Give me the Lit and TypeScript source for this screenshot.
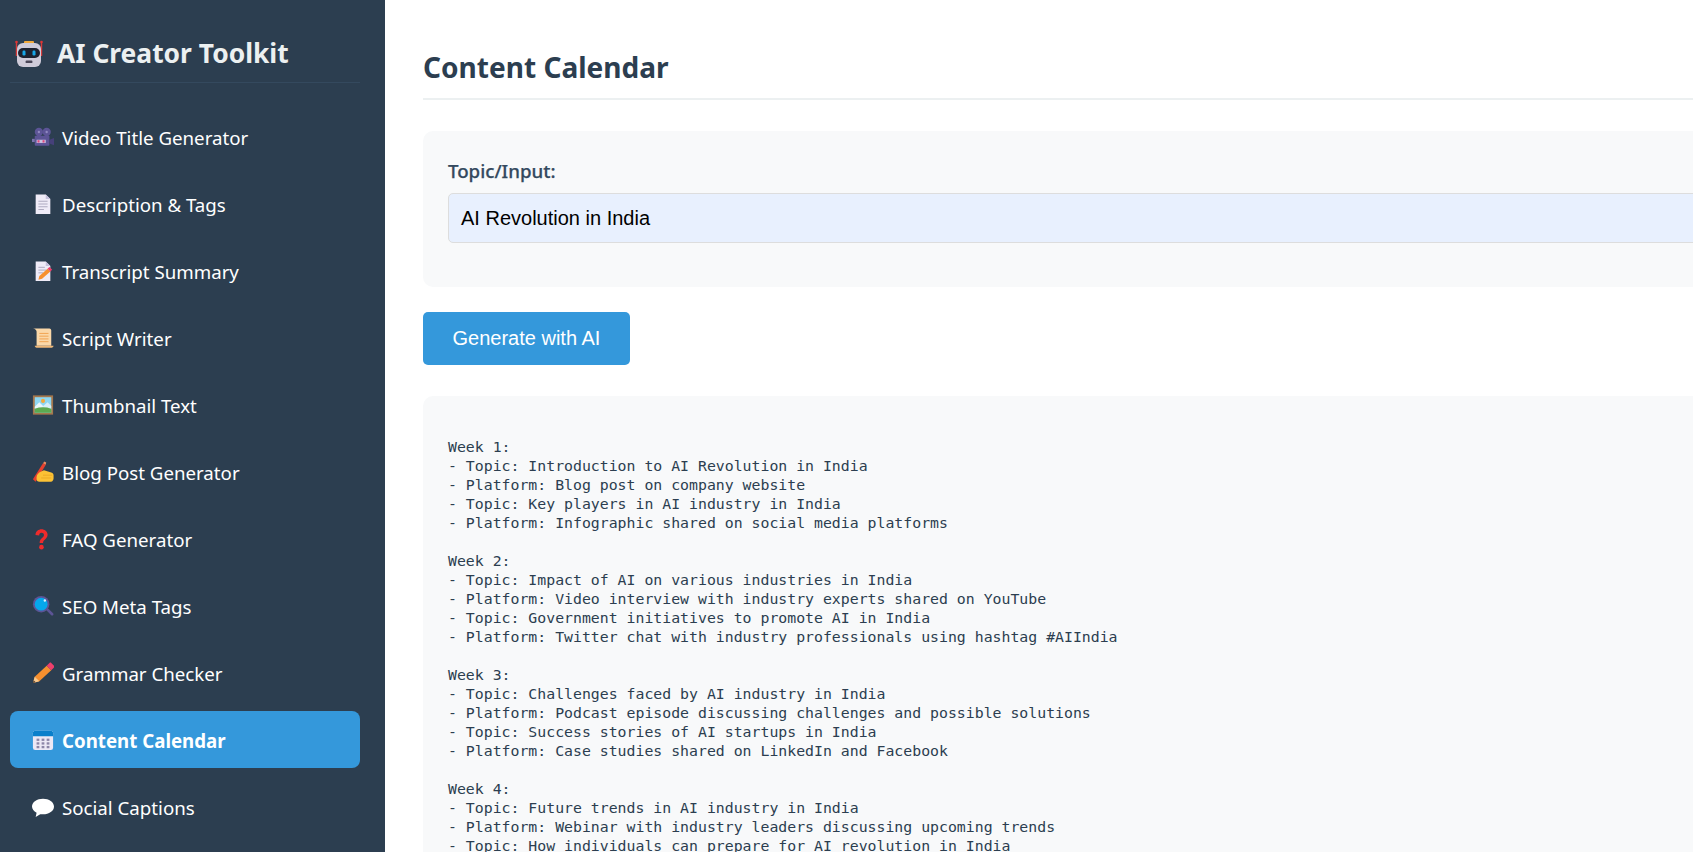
import { LitElement, html, css, svg } from "lit";
import { customElement } from "lit/decorators.js";

const icons: Record<string, unknown> = {
  camera: svg`<circle cx="7.500" cy="6.500" r="4.500" fill="#5c5496"/><circle cx="16" cy="6.500" r="4.500" fill="#5c5496"/><circle cx="7.500" cy="6.500" r="1.300" fill="#8f88c0"/><circle cx="16" cy="6.500" r="1.300" fill="#8f88c0"/><rect x="3" y="10.500" width="16" height="11" rx="1" fill="#5c5496"/><path d="M0 14h3v3.500H0z" fill="#7a73ae"/><path d="M19 15l5-2v8l-5-2z" fill="#46407a"/><rect x="5" y="15" width="10" height="3.500" fill="#c9c4e2"/><rect x="6" y="15.500" width="2.200" height="2.500" fill="#e0457b"/><rect x="11.500" y="15.500" width="2.200" height="2.500" fill="#e0457b"/>`,
  doc: svg`<path d="M4 1.500h11l5 5V23H4z" fill="#efebf7"/><path d="M15 1.500l5 5h-5z" fill="#c6c0dc"/><path d="M7 9h10M7 12h10M7 15h10M7 18h6" stroke="#a8a4bb" stroke-width="1"/>`,
  memo: svg`<path d="M4 1.500h11l5 5V23H4z" fill="#efebf7"/><path d="M15 1.500l5 5h-5z" fill="#c6c0dc"/><path d="M7 8h7M7 11h9M7 14h5" stroke="#a8a4bb" stroke-width="1"/><path d="M7 21.500l1-4 9-8 3 3-9 8z" fill="#f7902f"/><path d="M17 9.500l2-2 3 3-2 2z" fill="#ee3f6c"/>`,
  scroll: svg`<path d="M1 1.500h18c1 0 2 1 2 2v17H5V5c0-2-2-3.500-4-3.500z" fill="#fbd8a8"/><path d="M3 20.500h20.500c0 1-1 2-2 2H5c-1 0-2-1-2-2z" fill="#eeb878"/><path d="M8 7h10M8 10h10M8 13h10M8 16h10" stroke="#f0a04c" stroke-width="1"/>`,
  picture: svg`<rect x="1" y="1.500" width="22" height="21" fill="#a5774c"/><rect x="3" y="3.500" width="18" height="17" fill="#8fd7f2"/><circle cx="12" cy="7.500" r="2.200" fill="#f4a93b"/><path d="M3 14l5-5 7 7H3z" fill="#eaf6fb"/><path d="M10 15l7-6 4 4v4H10z" fill="#d8eef7"/><path d="M3 16c6-2 12-2 18 0v4.500H3z" fill="#5caa50"/>`,
  hand: svg`<path d="M1 20L12 2.500l3 1.500L4 22.500z" fill="#e8402e"/><path d="M12 2.500l1.500-2 2 1-.5 2.500z" fill="#f08a5d"/><path d="M5 18c0-3 2-5 5-6.500l3-1.300 8 2.300c2 .6 2.500 2 2.500 3v3.500c0 1.500-1 3.500-3 3.500H8c-2 0-3-1-3-3z" fill="#fcc235"/><path d="M12 15.500h10M10 18.500h11" stroke="#e9a41f" stroke-width=".8"/>`,
  question: svg`<g transform="translate(-2.800 -1.500) scale(1.100 1.150)"><path d="M6 8c0-3.500 3-5.500 6-5.500s6 2 6 5.300c0 4-4.500 4.500-4.500 7.700h-3.400c0-4.800 4.300-5 4.300-7.600 0-1.100-1.100-2-2.500-2S9.700 6.900 9.700 8.500z" fill="#ee2b2b"/><circle cx="11.900" cy="19.500" r="2.300" fill="#ee2b2b"/></g>`,
  search: svg`<path d="M14 15l2-2 7 7c.6.6.6 1.500 0 2s-1.500.6-2 0z" fill="#5c5496"/><circle cx="10" cy="10" r="9" fill="#5c5496"/><circle cx="10" cy="10" r="7" fill="#06a7ec"/><circle cx="14" cy="6" r="1.300" fill="#dff5ff"/>`,
  pencil: svg`<path d="M1 23l2-7L16 4l5 5L8 21z" fill="#f7902f"/><path d="M1 23l2-7 5 5z" fill="#f8c98e"/><path d="M1 23l.8-3 2.200 2.200z" fill="#4b3a2e"/><path d="M16 4l3-3c.8-.6 1.500-.6 2 0l3 3c.6.6.6 1.300 0 2l-3 3z" fill="#ee3f6c"/>`,
  calendar: svg`<rect x="1" y="2" width="22" height="21" rx="2.500" fill="#ece8f5"/><path d="M1 8V4.500C1 3 2 2 3.500 2h17C22 2 23 3 23 4.500V8z" fill="#0a7fcb"/><g fill="#8c86a8"><rect x="5" y="10.500" width="3" height="2.500"/><rect x="10.500" y="10.500" width="3" height="2.500"/><rect x="16" y="10.500" width="3" height="2.500"/><rect x="5" y="14.500" width="3" height="2.500"/><rect x="10.500" y="14.500" width="3" height="2.500"/><rect x="16" y="14.500" width="3" height="2.500"/><rect x="5" y="18.500" width="3" height="2.500"/><rect x="10.500" y="18.500" width="3" height="2.500"/><rect x="16" y="18.500" width="3" height="2.500"/></g>`,
  speech: svg`<path d="M12 3c6.500 0 12 3.500 12 8.500S18.500 20 12 20c-1 0-2 0-3-.2L4 23l1-4.800C2 16.600 0 14.300 0 11.500 0 6.500 5.500 3 12 3z" fill="#fff"/>`,
};

const nav = [
  ["camera", "Video Title Generator"],
  ["doc", "Description & Tags"],
  ["memo", "Transcript Summary"],
  ["scroll", "Script Writer"],
  ["picture", "Thumbnail Text"],
  ["hand", "Blog Post Generator"],
  ["question", "FAQ Generator"],
  ["search", "SEO Meta Tags"],
  ["pencil", "Grammar Checker"],
  ["calendar", "Content Calendar"],
  ["speech", "Social Captions"],
];

const output = `Week 1:
- Topic: Introduction to AI Revolution in India
- Platform: Blog post on company website
- Topic: Key players in AI industry in India
- Platform: Infographic shared on social media platforms

Week 2:
- Topic: Impact of AI on various industries in India
- Platform: Video interview with industry experts shared on YouTube
- Topic: Government initiatives to promote AI in India
- Platform: Twitter chat with industry professionals using hashtag #AIIndia

Week 3:
- Topic: Challenges faced by AI industry in India
- Platform: Podcast episode discussing challenges and possible solutions
- Topic: Success stories of AI startups in India
- Platform: Case studies shared on LinkedIn and Facebook

Week 4:
- Topic: Future trends in AI industry in India
- Platform: Webinar with industry leaders discussing upcoming trends
- Topic: How individuals can prepare for AI revolution in India`;

@customElement("app-root")
export class AppRoot extends LitElement {
  static styles = css`
    :host {
      display: flex;
      width: 100vw;
      height: 100vh;
      overflow: hidden;
      font-family: "Noto Sans", "Open Sans", sans-serif;
      background: #fff;
    }
    .sidebar {
      flex: none;
      width: 385px;
      box-sizing: border-box;
      height: 100%;
      padding: 0 25px 0 10px;
      background: #2c3e50;
      color: #ecf0f1;
    }
    .brand {
      display: flex;
      align-items: center;
      gap: 14px;
      height: 83px;
      box-sizing: border-box;
      padding: 23px 0 0 5px;
      border-bottom: 1px solid #34495e;
      font-size: 26.400px;
      font-weight: 700;
      white-space: nowrap;
    }
    .brand svg { width: 28px; height: 28px; flex: none; }
    .nav {
      display: flex;
      flex-direction: column;
      gap: 10px;
      margin-top: 25px;
    }
    .item {
      display: flex;
      align-items: center;
      gap: 8px;
      height: 57px;
      padding-left: 22px;
      border-radius: 8px;
      color: #fff;
      font-size: 18.700px;
      white-space: nowrap;
    }
    .item span { padding-top: 2px; }
    .item svg { width: 22px; height: 22px; flex: none; }
    .item.active {
      background: #3498db;
      font-weight: 700;
    }
    .main {
      flex: none;
      width: 1400px;
      box-sizing: border-box;
      padding: 0 0 0 38px;
    }
    h1 {
      margin: 0 0 31px;
      height: 100px;
      box-sizing: border-box;
      padding-top: 45px;
      border-bottom: 2px solid #ecf0f1;
      color: #2c3e50;
      font-size: 28.050px;
      line-height: 44px;
      font-weight: 700;
    }
    .form {
      box-sizing: border-box;
      height: 156px;
      padding: 25px;
      border-radius: 10px;
      background: #f8f9fa;
    }
    label {
      display: block;
      height: 37px;
      line-height: 30px;
      color: #34495e;
      font-size: 18.700px;
      font-weight: 500;
      -webkit-text-stroke: 0.25px #34495e;
    }
    .input {
      box-sizing: border-box;
      width: 100%;
      height: 50px;
      padding: 0 12px;
      border: 1px solid #dddddd;
      border-radius: 5px;
      background: #e8f0fe;
      color: #000;
      font: 20px/48px "Liberation Sans", Arial, sans-serif;
    }
    button {
      display: block;
      box-sizing: border-box;
      height: 53px;
      margin: 25px 0 31px;
      padding: 0 29.500px;
      border: 0;
      border-radius: 5px;
      background: #3498db;
      color: #fff;
      font: 20px "Liberation Sans", Arial, sans-serif;
    }
    .output {
      box-sizing: border-box;
      height: 700px;
      padding: 41px 25px 25px;
      border-radius: 10px;
      background: #f8f9fa;
    }
    pre {
      margin: 0;
      color: #2c3e50;
      font: 14.830px/19px "DejaVu Sans Mono", monospace;
    }
  `;

  render() {
    return html`
      <aside class="sidebar">
        <div class="brand">
          <svg viewBox="0 0 28 28">
            <path d="M1.500 4v13M26.500 4v13" stroke="#d63a3a" stroke-width="1.400"/>
            <circle cx="1.500" cy="3" r="1.300" fill="#e23434"/><circle cx="26.500" cy="3" r="1.300" fill="#e23434"/>
            <rect x="9" y="2" width="10" height="4" rx="1" fill="#f2a93b"/>
            <rect x="2" y="4" width="24" height="24" rx="6" fill="#cfcbd9"/>
            <rect x="3" y="9" width="22" height="10" rx="5" fill="#1d2230"/>
            <rect x="7.500" y="11.500" width="3" height="5" rx="1.200" fill="#17a7e8"/>
            <rect x="17.500" y="11.500" width="3" height="5" rx="1.200" fill="#17a7e8"/>
            <rect x="10.500" y="21.500" width="7" height="2.600" rx="1.200" fill="#4a4658"/>
          </svg>
          <span>AI Creator Toolkit</span>
        </div>
        <nav class="nav">
          ${nav.map(
            ([icon, label]) => html`<div class="item ${label === "Content Calendar" ? "active" : ""}">
              <svg viewBox="0 0 24 24">${icons[icon]}</svg><span>${label}</span>
            </div>`
          )}
        </nav>
      </aside>
      <main class="main">
        <h1>Content Calendar</h1>
        <section class="form">
          <label>Topic/Input:</label>
          <div class="input">AI Revolution in India</div>
        </section>
        <button>Generate with AI</button>
        <section class="output"><pre>${output}</pre></section>
      </main>
    `;
  }
}
